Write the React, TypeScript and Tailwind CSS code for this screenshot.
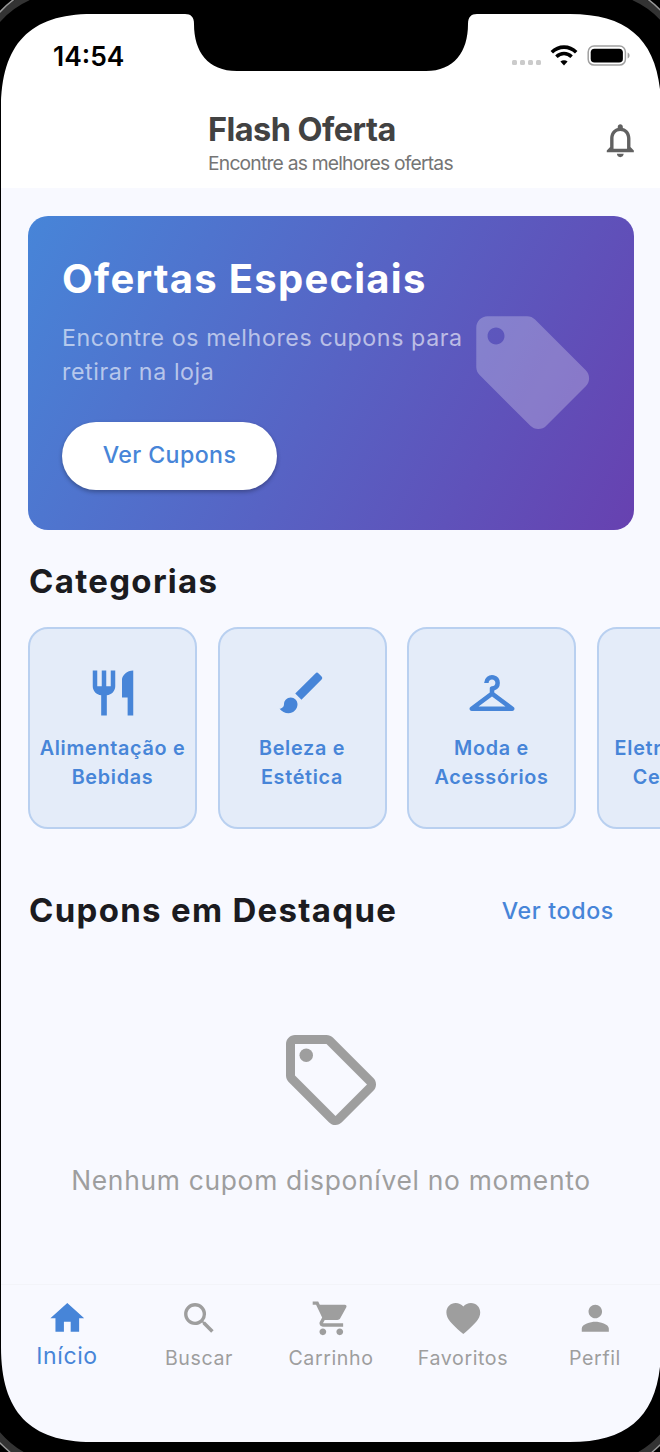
import type { ReactNode } from 'react';
import type { IconType } from 'react-icons';
import {
  MdBrush,
  MdCheckroom,
  MdFavorite,
  MdHome,
  MdLocalOffer,
  MdNotificationsNone,
  MdOutlineLocalOffer,
  MdPerson,
  MdPhoneAndroid,
  MdRestaurant,
  MdSearch,
  MdShoppingCart,
} from 'react-icons/md';

const categorias: { linhas: string[]; icon: IconType }[] = [
  { linhas: ['Alimentação e', 'Bebidas'], icon: MdRestaurant },
  { linhas: ['Beleza e', 'Estética'], icon: MdBrush },
  { linhas: ['Moda e', 'Acessórios'], icon: MdCheckroom },
  { linhas: ['Eletrônicos e', 'Celulares'], icon: MdPhoneAndroid },
];

const abas: { label: string; icon: IconType }[] = [
  { label: 'Início', icon: MdHome },
  { label: 'Buscar', icon: MdSearch },
  { label: 'Carrinho', icon: MdShoppingCart },
  { label: 'Favoritos', icon: MdFavorite },
  { label: 'Perfil', icon: MdPerson },
];

// Moldura do aparelho, desenhada por cima da tela
const PhoneFrame = () => (
  <svg className="absolute inset-0 pointer-events-none z-10" width="660" height="1452" viewBox="0 0 660 1452" fill="none">
    <path
      fillRule="evenodd"
      fill="#000"
      d="M0 0H662V1452H0Z M1 109C1 44 30 14 92 14H185C191 14 194 17 194 24C194 52 208 71 237 71H426C454 71 468 52 468 24C468 17 471 14 477 14H570C632 14 661 44 661 109V1347C661 1412 632 1442 570 1442H92C30 1442 1 1412 1 1347Z"
    />
    <path d="M-3 20Q10 5 28 -3" stroke="#333" strokeWidth="7" />
    <path d="M-2 14Q7 4 16 -2" stroke="#999" strokeWidth="1.5" />
    <path d="M634 -3Q652 5 665 20" stroke="#333" strokeWidth="7" />
    <path d="M646 -2Q655 4 664 14" stroke="#999" strokeWidth="1.5" />
    <path d="M-3 1434Q8 1447 22 1455" stroke="#333" strokeWidth="7" />
    <path d="M-2 1441Q5 1448 11 1453" stroke="#999" strokeWidth="1.5" />
    <path d="M640 1455Q654 1447 665 1434" stroke="#333" strokeWidth="7" />
    <path d="M651 1453Q657 1448 664 1441" stroke="#999" strokeWidth="1.5" />
  </svg>
);

const StatusBar = () => (
  <div className="flex h-[98px] items-start justify-between pl-[52px] pr-[31px]">
    <span className="mt-[39px] text-[26.4px] leading-[34px] font-semibold text-black">14:54</span>
    <div className="mt-[45px] flex items-start">
      <div className="mt-[15px] flex gap-[2.6px]">
        {[0, 1, 2, 3].map((i) => (
          <span key={i} className="size-[5.4px] rounded-[1.5px] bg-[#cbcbcb]" />
        ))}
      </div>
      <svg className="ml-[9px]" width="28" height="21" viewBox="0 0 28 21" fill="none" stroke="#000">
        <path d="M1.8 7.2C8.8 .4 19.2 .4 26.2 7.2" strokeWidth="3.6" />
        <path d="M6.4 11.7C10.8 7.4 17.2 7.4 21.6 11.7" strokeWidth="3.5" />
        <path d="M14 20.4L10.4 16.6C12.5 14.8 15.5 14.8 17.6 16.6Z" fill="#000" stroke="none" />
      </svg>
      <svg className="ml-[9px]" width="43" height="21" viewBox="0 0 43 21">
        <rect x="1.2" y="1.1" width="37.2" height="19" rx="5.8" fill="none" stroke="#a0a0a0" strokeWidth="1.5" />
        <rect x="3.7" y="3.7" width="32.2" height="13.8" rx="3.8" fill="#000" />
        <path d="M40.6 7.6C43.2 8.6 43.2 12.6 40.6 13.6Z" fill="#a0a0a0" />
      </svg>
    </div>
  </div>
);

const Header = () => (
  <div className="relative h-[90px] pl-[207px] pt-[13px]">
    <h1 className="text-[32.5px] leading-[38px] font-bold tracking-[-0.55px] text-[#424242]">Flash Oferta</h1>
    <p className="mt-[2px] text-[19.3px] leading-[24px] tracking-[-0.8px] text-[#757575]">Encontre as melhores ofertas</p>
    <MdNotificationsNone className="absolute left-[599px] top-[22px] size-[40.6px] text-[#616161]" />
  </div>
);

const Banner = () => (
  <div className="mt-[27.5px] ml-[27px] flex h-[314.5px] w-[606px] rounded-[20px] bg-[linear-gradient(117.5deg,#4785d8_0%,#6741b0_100%)] pl-[34px]">
    <div className="w-[403px] pt-[38.5px]">
      <h2 className="text-[40px] leading-[50px] font-bold tracking-[1.25px] whitespace-nowrap text-white">Ofertas Especiais</h2>
      <p className="mt-[17px] text-[23.2px] leading-[34px] tracking-[0.6px] whitespace-nowrap text-white/60">
        Encontre os melhores cupons para
        <br />
        retirar na loja
      </p>
      <button className="mt-[33px] h-[67.5px] w-[215px] rounded-full bg-white text-[23.2px] font-medium tracking-[0.4px] text-[#4785d8] shadow-[0_2px_4px_rgba(0,0,0,0.3)]">
        Ver Cupons
      </button>
    </div>
    <MdLocalOffer className="mt-[89.5px] size-[135.4px] shrink-0 text-white/25" />
  </div>
);

const SectionTitle = ({ children }: { children: ReactNode }) => (
  <h3 className="text-[33px] leading-[42px] font-bold tracking-[1.3px] text-[#1b1b20]">{children}</h3>
);

const Categorias = () => (
  <div className="mt-[30px]">
    <div className="pl-[28px]">
      <SectionTitle>Categorias</SectionTitle>
    </div>
    <div className="mt-[24.5px] ml-[27px] flex gap-[20.5px]">
      {categorias.map(({ linhas, icon: Icon }) => (
        <div
          key={linhas[0]}
          className="flex h-[202.5px] w-[169px] shrink-0 flex-col items-center rounded-[20px] border-2 border-[#b9d0f0] bg-[#e4ecf9] pt-[37px] text-[#4785d8]"
        >
          <Icon className="size-[54px] shrink-0" />
          <p className="mt-[14px] text-center text-[19.8px] leading-[29px] font-semibold tracking-[0.7px] whitespace-nowrap">
            {linhas[0]}
            <br />
            {linhas[1]}
          </p>
        </div>
      ))}
    </div>
  </div>
);

const Destaques = () => (
  <div className="mt-[60px]">
    <div className="flex items-center justify-between pr-[47px] pl-[28px]">
      <SectionTitle>Cupons em Destaque</SectionTitle>
      <span className="mt-[2px] text-[23.2px] leading-[30px] font-medium tracking-[0.65px] text-[#4785d8]">Ver todos</span>
    </div>
    <div className="mt-[95px] flex flex-col items-center text-[#9e9e9e]">
      <MdOutlineLocalOffer className="size-[108px]" />
      <p className="mt-[28px] text-[26.4px] leading-[36px] tracking-[0.7px] whitespace-nowrap">Nenhum cupom disponível no momento</p>
    </div>
  </div>
);

const BottomNav = () => (
  <div className="mt-auto flex h-[158px] border-t border-[#f3f4f9] pt-[12.5px]">
    {abas.map(({ label, icon: Icon }, i) => (
      <div key={label} className={`flex flex-1 flex-col items-center ${i === 0 ? 'text-[#4785d8]' : 'text-[#9e9e9e]'}`}>
        <Icon className="size-[40.6px]" />
        <span className={i === 0 ? 'mt-[3px] text-[23px] leading-[30px] tracking-[0.6px]' : 'mt-[6px] text-[19.6px] leading-[28px] tracking-[0.6px]'}>
          {label}
        </span>
      </div>
    ))}
  </div>
);

const App = () => {
  return (
    <div className="relative h-[1452px] w-[660px] overflow-hidden bg-black font-[Inter,sans-serif]">
      <div className="ml-px flex h-[1442px] w-[660px] flex-col bg-[#f8f9ff]">
        <div className="bg-white">
          <StatusBar />
          <Header />
        </div>
        <Banner />
        <Categorias />
        <Destaques />
        <BottomNav />
      </div>
      <PhoneFrame />
    </div>
  );
};

export default App;
